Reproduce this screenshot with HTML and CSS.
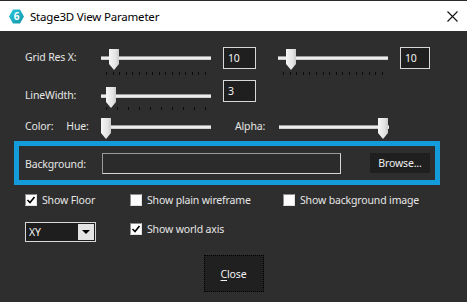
FILE: index.html
```html
<!DOCTYPE html>
<html lang="en">
<head>
    <meta charset="UTF-8">
    <title>Stage3D View Parameter</title>
    <link rel="stylesheet" href="styles.css">
</head>
<body>
    <div class="window">
        <!-- Title bar -->
        <div class="titlebar">
            <svg class="app-icon" width="15" height="15" viewBox="0 0 15 15">
                <defs>
                    <linearGradient id="hex" x1="0" y1="0" x2="1" y2="1">
                        <stop offset="0" stop-color="#2cc6dc"/>
                        <stop offset="1" stop-color="#1596a8"/>
                    </linearGradient>
                </defs>
                <polygon points="4,0.5 11,0.5 15,7.5 11,14.5 4,14.5 0,7.5" fill="url(#hex)"/>
                <text x="7.5" y="11.3" text-anchor="middle" class="app-icon-text">6</text>
            </svg>
            <span class="title">Stage3D View Parameter</span>
            <svg class="close-x" width="11" height="11" viewBox="0 0 11 11">
                <path d="M0.5 0.5 L10.5 10.5 M10.5 0.5 L0.5 10.5" stroke="#111" stroke-width="1.1" fill="none"/>
            </svg>
        </div>

        <div class="content">
            <!-- Grid resolution -->
            <div class="row row-grid">
                <span class="label">Grid Res X:</span>
                <div class="slider">
                    <div class="track"></div>
                    <div class="thumb" style="left: 8px"></div>
                    <div class="ticks">
                        <i></i><i></i><i></i><i></i><i></i><i></i><i></i><i></i>
                        <i></i><i></i><i></i><i></i><i></i><i></i><i></i><i></i>
                    </div>
                </div>
                <div class="num">10</div>
                <div class="slider slider-right">
                    <div class="track"></div>
                    <div class="thumb" style="left: 8px"></div>
                    <div class="ticks">
                        <i></i><i></i><i></i><i></i><i></i><i></i><i></i><i></i>
                        <i></i><i></i><i></i><i></i><i></i><i></i><i></i><i></i>
                    </div>
                </div>
                <div class="num num-small">10</div>
            </div>

            <!-- Line width -->
            <div class="row row-line">
                <span class="label">LineWidth:</span>
                <div class="slider">
                    <div class="track"></div>
                    <div class="thumb" style="left: 5px"></div>
                    <div class="ticks ticks-close">
                        <i></i><i></i><i></i><i></i><i></i>
                        <i></i><i></i><i></i><i></i><i></i>
                    </div>
                </div>
                <div class="num">3</div>
            </div>

            <!-- Color -->
            <div class="row row-color">
                <span class="label label-color">Color:<span class="hue">Hue:</span></span>
                <div class="slider slider-short">
                    <div class="track"></div>
                    <div class="thumb" style="left: 0px"></div>
                </div>
                <span class="alpha">Alpha:</span>
                <div class="slider slider-short">
                    <div class="track"></div>
                    <div class="thumb" style="left: 99px"></div>
                </div>
            </div>

            <!-- Background -->
            <div class="bg-group">
                <span class="label">Background:</span>
                <div class="path-input"></div>
                <div class="browse">Browse...</div>
            </div>

            <!-- Options -->
            <div class="checks">
                <label class="check check-floor">
                    <span class="box checked">
                        <svg width="10" height="10" viewBox="0 0 10 10"><path d="M1.5 5 L4 7.5 L8.5 2" stroke="#000" stroke-width="1.6" fill="none"/></svg>
                    </span>
                    Show Floor
                </label>
                <label class="check check-wire">
                    <span class="box"></span>
                    Show plain wireframe
                </label>
                <label class="check">
                    <span class="box"></span>
                    Show background image
                </label>
            </div>

            <div class="checks checks-second">
                <div class="dropdown">
                    <span class="dropdown-value">XY</span>
                    <span class="dropdown-btn"><span class="arrow"></span></span>
                </div>
                <label class="check">
                    <span class="box checked">
                        <svg width="10" height="10" viewBox="0 0 10 10"><path d="M1.5 5 L4 7.5 L8.5 2" stroke="#000" stroke-width="1.6" fill="none"/></svg>
                    </span>
                    Show world axis
                </label>
            </div>

            <div class="footer">
                <button class="close-btn"><span class="focus"><u>C</u>lose</span></button>
            </div>
        </div>
    </div>
</body>
</html>
```

FILE: styles.css
```css
/* Reset */
* {
    margin: 0;
    padding: 0;
    box-sizing: border-box;
}

body {
    font-family: 'Noto Sans', 'Open Sans', sans-serif;
    font-size: 10.5px;
    letter-spacing: -0.15px;
    background: #2e2e2e;
    color: #e6e6e6;
    overflow: hidden;
}

.window {
    width: 467px;
    height: 302px;
    display: flex;
    flex-direction: column;
}

/* Title bar */
.titlebar {
    height: 31px;
    flex-shrink: 0;
    background: #ffffff;
    border-top: 1px solid #2a2a2a;
    display: flex;
    align-items: center;
    padding-left: 9px;
    color: #000;
}

.app-icon {
    margin-right: 6px;
}

.app-icon-text {
    font-family: 'Noto Sans', sans-serif;
    font-size: 10px;
    font-weight: 700;
    fill: #ffffff;
}

.title {
    font-size: 11.5px;
    letter-spacing: -0.2px;
}

.close-x {
    margin-left: auto;
    margin-right: 9px;
}

/* Content */
.content {
    flex: 1;
    background: #2e2e2e;
    padding-top: 15px;
}

.row {
    display: flex;
    align-items: flex-start;
    padding-left: 25px;
}

.label {
    width: 76px;
    line-height: 16px;
    flex-shrink: 0;
}

.row-grid {
    height: 30px;
}

.row-grid .label {
    margin-top: 3px;
}

.row-line {
    margin-top: 4px;
    height: 34px;
}

.row-line .label {
    margin-top: 7px;
}

.row-line .slider {
    margin-top: 4px;
}

.row-color {
    margin-top: 1px;
    height: 25px;
}

.row-color .label {
    margin-top: 3px;
}

.hue {
    margin-left: 13px;
}

.alpha {
    width: 44px;
    margin-left: 24px;
    margin-top: 3px;
    line-height: 16px;
}

/* Sliders */
.slider {
    position: relative;
    width: 110px;
    height: 30px;
    flex-shrink: 0;
}

.slider-short {
    height: 25px;
}

.slider-right {
    margin-left: 22px;
}

.track {
    position: absolute;
    left: 0;
    right: 0;
    top: 10px;
    height: 4px;
    background: #ececec;
    border-top: 1px solid #9c9c9c;
    border-bottom: 1px solid #cfcfcf;
}

.thumb {
    position: absolute;
    top: 3px;
    width: 10px;
    height: 21px;
    background: linear-gradient(90deg, #f6f6f6, #e2e2e2 70%, #c9c9c9);
    clip-path: polygon(0 0, 100% 0, 100% 72%, 50% 100%, 0 72%);
}

.ticks {
    position: absolute;
    left: 5px;
    width: 100px;
    top: 26px;
    height: 3px;
    display: flex;
    justify-content: space-between;
}

.ticks-close {
    top: 23px;
}

.ticks i {
    display: block;
    width: 1px;
    height: 3px;
    background: #0c0c0c;
}

/* Number boxes */
.num {
    width: 33px;
    height: 22px;
    margin-left: 12px;
    margin-top: 1px;
    background: #1f1f1f;
    border: 1px solid #d8d8d8;
    color: #f2f2f2;
    padding-left: 4px;
    line-height: 20px;
}

.row-line .num {
    margin-top: 0;
}

.num-small {
    width: 30px;
}

/* Background group (highlighted) */
.bg-group {
    margin-left: 14px;
    margin-top: 1px;
    width: 426px;
    height: 44px;
    border: 5px solid #139bdb;
    display: flex;
    align-items: flex-start;
    padding: 7px 0 0 6px;
}

.bg-group .label {
    width: 77px;
    margin-top: 3px;
}

.path-input {
    width: 239px;
    height: 21px;
    border: 1px solid #9a9a9a;
    border-bottom-color: #d6d6d6;
    border-right-color: #d6d6d6;
    background: #2b2b2b;
}

.browse {
    width: 60px;
    height: 20px;
    margin-left: 29px;
    background: #1f1f1f;
    color: #f0f0f0;
    text-align: center;
    line-height: 20px;
}

/* Check boxes */
.checks {
    display: flex;
    align-items: center;
    padding-left: 25px;
    margin-top: 7px;
    height: 16px;
}

.check {
    display: flex;
    align-items: center;
    gap: 5px;
    line-height: 16px;
}

.check-floor {
    width: 105px;
}

.check-wire {
    width: 153px;
}

.box {
    width: 12px;
    height: 12px;
    background: #ffffff;
    border: 1px solid #8c8c8c;
    border-right-color: #e0e0e0;
    border-bottom-color: #e0e0e0;
    display: flex;
    align-items: center;
    justify-content: center;
}

.checks-second {
    margin-top: 14px;
    height: 20px;
    align-items: flex-start;
}

.checks-second .check {
    margin-left: 34px;
    margin-top: -1px;
}

/* Dropdown */
.dropdown {
    width: 71px;
    height: 20px;
    border: 1px solid #d8d8d8;
    background: #1e1e1e;
    display: flex;
    align-items: center;
    padding: 1px;
}

.dropdown-value {
    flex: 1;
    padding-left: 2px;
    color: #f2f2f2;
}

.dropdown-btn {
    width: 16px;
    height: 16px;
    background: #e4e4e4;
    display: flex;
    align-items: center;
    justify-content: center;
}

.arrow {
    width: 0;
    height: 0;
    border-left: 4px solid transparent;
    border-right: 4px solid transparent;
    border-top: 4px solid #000;
}

/* Footer */
.footer {
    display: flex;
    justify-content: center;
    margin-top: 13px;
}

.close-btn {
    width: 60px;
    height: 37px;
    background: #202020;
    border: none;
    color: #f2f2f2;
    font-family: inherit;
    font-size: 10.5px;
    letter-spacing: -0.15px;
    display: flex;
    padding: 0;
}

.close-btn .focus {
    flex: 1;
    border: 1px dotted #000;
    display: flex;
    align-items: center;
    justify-content: center;
}

.close-btn u {
    text-underline-offset: 2px;
}
```
